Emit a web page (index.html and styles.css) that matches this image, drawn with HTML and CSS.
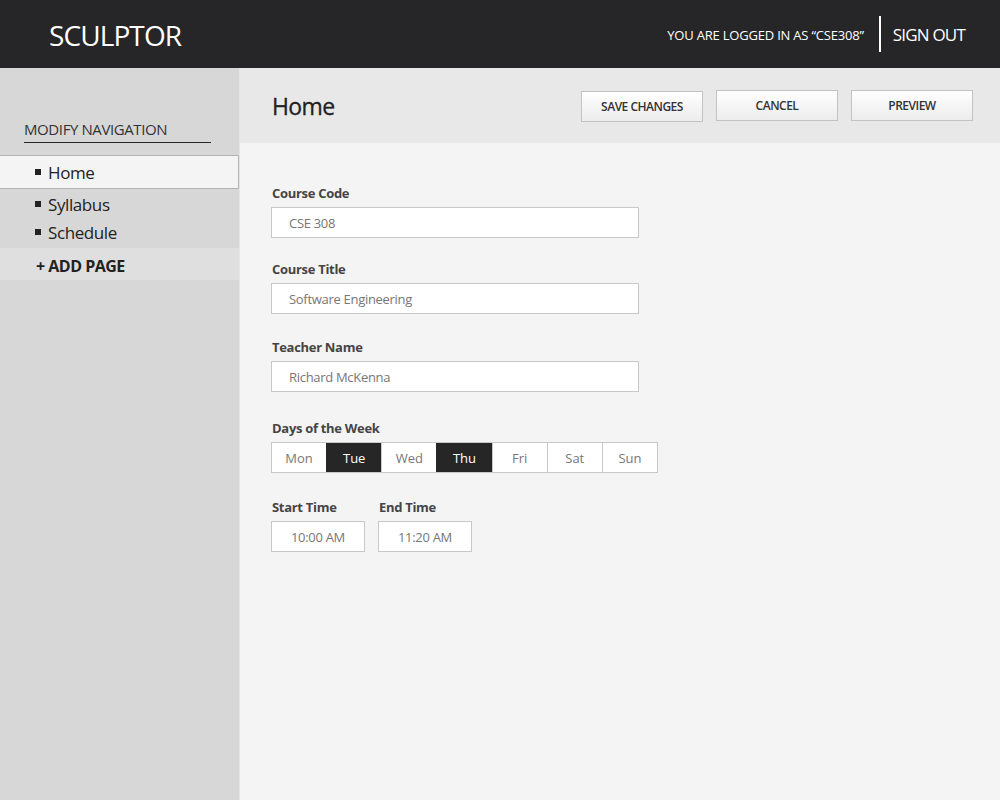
FILE: index.html
```html
<!DOCTYPE html>
<html>
<head>
<meta charset="utf-8">
<link rel="stylesheet" href="styles.css">
</head>
<body>
<header class="topbar">
  <div class="logo">SCULPTOR</div>
  <div class="user">
    <span class="logged">YOU ARE LOGGED IN AS “CSE308”</span>
    <span class="divider"></span>
    <span class="signout">SIGN OUT</span>
  </div>
</header>
<div class="layout">
  <aside class="sidebar">
    <div class="nav-title">MODIFY NAVIGATION</div>
    <ul class="nav">
      <li class="nav-item active"><span class="bullet"></span>Home</li>
      <li class="nav-item"><span class="bullet"></span>Syllabus</li>
      <li class="nav-item"><span class="bullet"></span>Schedule</li>
    </ul>
    <div class="add-page">+ ADD PAGE</div>
  </aside>
  <main class="main">
    <div class="titlebar">
      <h1 class="page-title">Home</h1>
      <div class="actions">
        <button class="btn btn-save">SAVE CHANGES</button>
        <button class="btn">CANCEL</button>
        <button class="btn">PREVIEW</button>
      </div>
    </div>
    <form class="form">
      <div class="field">
        <label class="label">Course Code</label>
        <div class="input wide">CSE 308</div>
      </div>
      <div class="field">
        <label class="label">Course Title</label>
        <div class="input wide">Software Engineering</div>
      </div>
      <div class="field">
        <label class="label">Teacher Name</label>
        <div class="input wide">Richard McKenna</div>
      </div>
      <div class="field">
        <label class="label">Days of the Week</label>
        <div class="days">
          <span class="day">Mon</span>
          <span class="day on">Tue</span>
          <span class="day">Wed</span>
          <span class="day on">Thu</span>
          <span class="day">Fri</span>
          <span class="day">Sat</span>
          <span class="day">Sun</span>
        </div>
      </div>
      <div class="times">
        <div class="field">
          <label class="label">Start Time</label>
          <div class="input time">10:00 AM</div>
        </div>
        <div class="field">
          <label class="label">End Time</label>
          <div class="input time">11:20 AM</div>
        </div>
      </div>
    </form>
  </main>
</div>
</body>
</html>
```
FILE: styles.css
```css
* { box-sizing: border-box; }
html, body { margin: 0; padding: 0; height: 100%; }
body {
  font-family: "Open Sans", "Liberation Sans", sans-serif;
  background: #f4f4f4;
  color: #333;
  overflow: hidden;
}
.topbar {
  height: 68px;
  background: #262628;
  display: flex;
  align-items: center;
  justify-content: space-between;
  padding: 0 35px 0 49px;
  color: #fff;
}
.logo {
  font-size: 28px;
  letter-spacing: -0.9px;
  margin-top: 1px;
}
.user {
  display: flex;
  align-items: center;
}
.logged {
  font-size: 13px;
  letter-spacing: -0.2px;
  margin-top: 2px;
}
.divider {
  width: 2px;
  height: 36px;
  background: #fff;
  margin: 0 12px 0 15px;
}
.signout {
  font-size: 17px;
  letter-spacing: -0.8px;
}
.layout {
  display: flex;
  height: 732px;
}
.sidebar {
  width: 240px;
  flex: none;
  background: #d7d7d7;
  border-right: 1px solid #e4e4e4;
  padding-top: 52px;
}
.nav-title {
  margin-left: 24px;
  width: 187px;
  font-size: 15px;
  letter-spacing: -0.4px;
  color: #333;
  padding-bottom: 4px;
  border-bottom: 1px solid #2a2a2a;
  line-height: 18px;
}
.nav {
  list-style: none;
  margin: 12px 0 0;
  padding: 0;
}
.nav-item {
  display: flex;
  align-items: center;
  height: 28px;
  padding-left: 35px;
  font-size: 17px;
  letter-spacing: -0.4px;
  color: #222;
}
.nav-item.active {
  height: 34px;
  background: #f4f4f4;
  border: 1px solid #b4b4b4;
  border-left: none;
  width: 239px;
  margin-bottom: 1px;
}
.bullet {
  width: 6px;
  height: 6px;
  background: #222;
  margin-right: 7px;
}
.add-page {
  margin-top: 2px;
  height: 32px;
  background: #dfdfdf;
  display: flex;
  align-items: center;
  padding: 3px 0 0 36px;
  font-size: 16px;
  font-weight: 700;
  letter-spacing: -0.5px;
  color: #222;
  width: 239px;
}
.main {
  flex: 1;
  background: #f4f4f4;
}
.titlebar {
  height: 75px;
  background: #e8e8e8;
  display: flex;
  align-items: flex-start;
  justify-content: space-between;
  padding: 0 27px 0 32px;
}
.page-title {
  margin: 22px 0 0;
  font-size: 23px;
  font-weight: 500;
  letter-spacing: -0.6px;
  color: #222;
  -webkit-text-stroke: 0.3px #222;
}
.actions {
  display: flex;
  gap: 13px;
  padding-top: 22px;
}
.btn {
  width: 122px;
  height: 31px;
  border: 1px solid #c2c2c2;
  background: linear-gradient(#ffffff, #ececec);
  font-family: "Open Sans", "Liberation Sans", sans-serif;
  font-size: 12px;
  font-weight: 600;
  letter-spacing: -0.5px;
  color: #333;
  padding: 0;
}
.btn-save { margin-top: 1px; }
.form {
  padding: 41px 0 0 31px;
}
.field {
  display: flex;
  flex-direction: column;
}
.label {
  font-size: 13px;
  font-weight: 700;
  letter-spacing: -0.3px;
  color: #444;
  line-height: 18px;
  margin-left: 1px;
  margin-bottom: 5px;
}
.input {
  height: 31px;
  border: 1px solid #c8c8c8;
  background: #fff;
  font-size: 13px;
  letter-spacing: -0.3px;
  color: #777;
  display: flex;
  align-items: center;
}
.input.wide {
  width: 368px;
  padding-left: 17px;
  margin-bottom: 22px;
}
.field:nth-child(2) .input.wide { margin-bottom: 24px; }
.field:nth-child(3) .input.wide { margin-bottom: 27px; }
.days {
  display: flex;
  width: 387px;
  height: 31px;
  border: 1px solid #c8c8c8;
  background: #fff;
  margin-bottom: 25px;
}
.day {
  flex: 1;
  display: flex;
  align-items: center;
  justify-content: center;
  font-size: 13px;
  color: #777;
  border-left: 1px solid #c8c8c8;
}
.day:first-child { border-left: none; }
.day.on {
  background: #262626;
  color: #fff;
  border-left-color: #262626;
}
.times {
  display: flex;
  gap: 13px;
}
.input.time {
  width: 94px;
  justify-content: center;
}
```
